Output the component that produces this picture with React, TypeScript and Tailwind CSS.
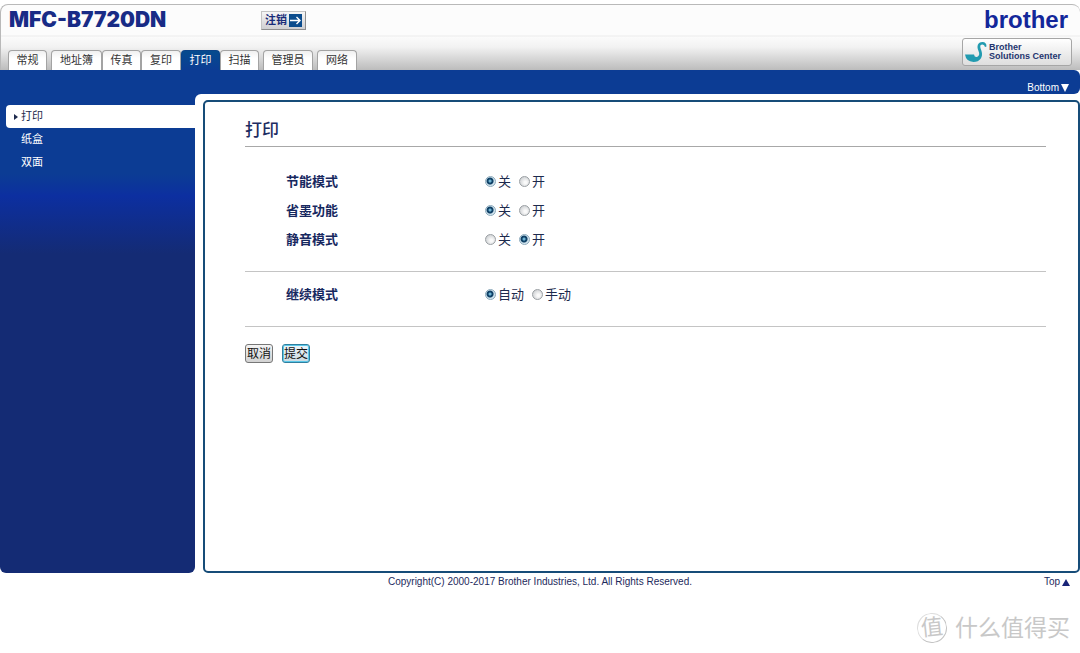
import { useState } from 'react';

const tabs = [
  { label: '常规', style: 'w-[39px] mr-1' },
  { label: '地址簿', style: 'w-[51px]' },
  { label: '传真', style: 'w-[39px]' },
  { label: '复印', style: 'w-10' },
  { label: '打印', style: 'w-[39px]' },
  { label: '扫描', style: 'w-[39px] mr-1' },
  { label: '管理员', style: 'w-[50px] mr-1' },
  { label: '网络', style: 'w-10' },
];

const modes = [
  { label: '节能模式', name: 'eco', options: ['关', '开'], value: '关' },
  { label: '省墨功能', name: 'toner', options: ['关', '开'], value: '关' },
  { label: '静音模式', name: 'quiet', options: ['关', '开'], value: '开' },
];

const continueMode = [
  { label: '继续模式', name: 'continue', options: ['自动', '手动'], value: '自动' },
];

type Setting = { label: string; name: string; options: string[]; value: string };

function SettingRow({ label, name, options, value }: Setting) {
  const [selected, setSelected] = useState(value);
  return (
    <div role="radiogroup" aria-label={label} className="flex h-[29px] items-center">
      <span className="w-[199px] text-[13px] font-bold text-[#17285f]">{label}</span>
      <div className="flex gap-2">
        {options.map((option) => (
          <label key={option} className="flex items-center gap-[2px] text-[13px] text-[#1d2a4d]">
            <input
              type="radio"
              name={name}
              checked={selected === option}
              onChange={() => setSelected(option)}
              className="size-[11px] appearance-none rounded-full border border-[#9a9fa3] bg-[radial-gradient(circle_at_60%_60%,#fafafa_15%,#c9cccf_85%)] checked:border-[#8ba9bb] checked:bg-[radial-gradient(circle_at_45%_45%,#6fb4d4_0_1px,#0f4167_2px_3px,#d3e5ef_4px)]"
            />
            {option}
          </label>
        ))}
      </div>
    </div>
  );
}

function SettingGroup({ items, className }: { items: Setting[]; className: string }) {
  return (
    <div className={`border-b border-[#c4c4c4] pl-[41px] ${className}`}>
      {items.map((item) => (
        <SettingRow key={item.name} {...item} />
      ))}
    </div>
  );
}

export default function App() {
  return (
    <div className="bg-white pt-1 font-['Liberation_Sans','Noto_Sans_CJK_SC',sans-serif] text-xs text-[#1d2a5c]">
      <header className="rounded-t-lg border-t border-l border-[#b9b9b9] bg-[linear-gradient(#fcfcfc_0_30px,#ececec_31px,#fbfbfb_32px,#f2f2f2_42px,#bcbcbc)]">
        <div className="flex h-[30px] items-center pr-3 pl-2">
          <h1 className="w-[252px] font-['Inter','Liberation_Sans',sans-serif] text-[21px] font-black text-[#182b86]">
            MFC-B7720DN
          </h1>
          <button
            type="button"
            className="flex h-[19px] items-center gap-[2px] border border-[#c4c4c4] border-r-[#8e8e8e] border-b-[#8e8e8e] bg-linear-to-b from-[#f6f6f6] to-[#cfcfd2] px-[3px] text-[11px] font-bold text-[#172b78]"
          >
            注销
            <svg viewBox="0 0 13 13" className="size-[13px]" aria-hidden="true">
              <rect width="13" height="13" fill="#0b4c8d" />
              <path d="M1 6.5h10M7.5 3l3.5 3.5L7.5 10" fill="none" stroke="#fff" strokeWidth="1.4" />
            </svg>
          </button>
          <span className="ml-auto text-2xl leading-7 font-bold text-[#13279a]">brother</span>
        </div>
        <div className="flex h-[35px] items-end pr-2 pl-[7px]">
          <nav className="flex">
            {tabs.map((tab) => (
              <a
                key={tab.label}
                href="#"
                aria-current={tab.label === '打印' ? 'page' : undefined}
                className={`flex h-5 items-center justify-center rounded-t-[4px] border border-b-0 text-[11px] ${tab.style} ${
                  tab.label === '打印'
                    ? 'border-[#0b4389] bg-linear-to-b from-[#064b8e] to-[#0c3c94] text-white'
                    : 'border-[#a3a3a3] bg-linear-to-b from-[#f0f0f0] to-white to-40% text-[#333]'
                }`}
              >
                {tab.label}
              </a>
            ))}
          </nav>
          <a
            href="#"
            className="mb-1 ml-auto flex h-7 w-[110px] items-center gap-[2px] rounded-[3px] border border-[#a6a6a6] bg-linear-to-b from-white to-[#dedede] pl-[2px] text-[9px] leading-[9px] font-bold text-[#24356f]"
          >
            <svg viewBox="0 0 22 22" className="size-[22px] shrink-0" aria-hidden="true">
              <path
                d="M0 13.5H9Q9.500 16.500 12 16Q15.500 14.500 13.500 10C11.500 5.500 12.500 1 17.500 1Q21.500 1 21.500 5.500L20 6Q19.500 3.500 17.500 3.500C14 3.500 15.500 7 16.500 10C18.500 16 15 21 8.500 21Q1 20.500 0 13.500Z"
                fill="#229bb0"
              />
            </svg>
            <span className="whitespace-nowrap">
              Brother
              <br />
              Solutions Center
            </span>
          </a>
        </div>
      </header>

      <div id="top" className="flex h-6 items-end justify-end rounded-r-md bg-[#0c3c94] pr-[11px] text-[10px] leading-3 text-white">
        <a href="#bottom" className="flex items-center gap-[2px]">
          Bottom
          <svg viewBox="0 0 8 8" className="size-2" aria-hidden="true">
            <path d="M0 0h8L4 8Z" fill="currentColor" />
          </svg>
        </a>
      </div>

      <div className="flex min-h-[479px] bg-[linear-gradient(#0c3c94_0_10px,#fff_10px)]">
        <aside className="w-[195px] shrink-0 rounded-b-md bg-[linear-gradient(#0c3c94_0_80px,#0c2fa0_102px,#142b74_160px)] pt-[11px] pl-[6px] text-[11px] text-white">
          <nav className="flex flex-col">
            <a href="#" aria-current="page" className="flex h-[23px] items-center rounded-l-[4px] bg-white pl-2 text-[#1d2a4d]">
              <svg viewBox="0 0 4 6" className="mr-[3px] h-[6px] w-1" aria-hidden="true">
                <path d="M0 0l4 3-4 3Z" fill="currentColor" />
              </svg>
              打印
            </a>
            <a href="#" className="flex h-[23px] items-center pl-[15px]">纸盒</a>
            <a href="#" className="flex h-[23px] items-center pl-[15px]">双面</a>
          </nav>
        </aside>
        <div className="flex min-w-0 flex-1 rounded-tl-md bg-white pt-[6px] pl-2">
          <main className="flex-1 rounded-[5px] border-2 border-[#164c78] pr-8 pl-10">
            <h2 className="h-[45px] border-b border-[#a8a8a8] pt-[17px] text-[17px] leading-6 font-medium text-[#1d2c62]">
              打印
            </h2>
            <form onSubmit={(event) => event.preventDefault()}>
              <SettingGroup items={modes} className="pt-5 pb-[17px]" />
              <SettingGroup items={continueMode} className="pt-2 pb-[17px]" />
              <div className="flex gap-[9px] pt-[17px] text-[12px] leading-4 text-[#111]">
                <button type="button" className="h-[19px] w-7 rounded-[3px] border border-[#777] bg-linear-to-b from-[#f4f4f4] to-[#d2d2d2]">
                  取消
                </button>
                <button type="submit" className="h-[19px] w-7 rounded-[3px] border border-[#2f7f9f] bg-linear-to-b from-[#eef6fa] to-[#cbd9e0] shadow-[inset_0_0_0_1px_#59c7e8]">
                  提交
                </button>
              </div>
            </form>
          </main>
        </div>
      </div>

      <footer id="bottom">
        <div className="grid grid-cols-[1fr_auto_1fr] px-[10px] pt-[2px] text-[10px] leading-[14px]">
          <p className="col-start-2">Copyright(C) 2000-2017 Brother Industries, Ltd. All Rights Reserved.</p>
          <a href="#top" className="flex items-center gap-[2px] justify-self-end">
            Top
            <svg viewBox="0 0 8 7" className="h-[7px] w-2" aria-hidden="true">
              <path d="M0 7h8L4 0Z" fill="#182478" />
            </svg>
          </a>
        </div>
        <div className="flex items-center justify-end gap-2 pt-6 pr-[10px] text-[#c8c8c8]">
          <span className="flex size-[30px] -rotate-6 items-center justify-center rounded-full border border-[#dedede] border-r-[#c4c4c4] border-b-[#c4c4c4] text-[22px] leading-none">
            值
          </span>
          <span className="text-[23px] leading-[30px]">什么值得买</span>
        </div>
      </footer>
    </div>
  );
}
